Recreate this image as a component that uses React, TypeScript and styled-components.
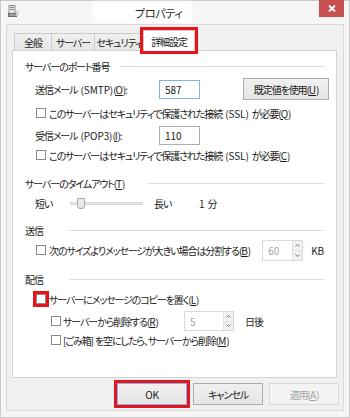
import styled, { createGlobalStyle } from "styled-components";

const RED = "#e8141b";

const GlobalStyle = createGlobalStyle`
  html, body {
    margin: 0;
    padding: 0;
    background: #ffffff;
  }
  body {
    font-family: "Noto Sans CJK JP", "Noto Sans", sans-serif;
    font-size: 10px;
    letter-spacing: -1.1px;
    word-spacing: 1px;
    color: #1a1a1a;
    font-feature-settings: "palt";
  }
  * { box-sizing: border-box; }
`;

const Window = styled.div`
  width: 350px;
  height: 418px;
  border: 1px solid #c9c9c9;
  background: #f6f6f6;
  display: flex;
  flex-direction: column;
`;

const TitleBar = styled.div`
  height: 23px;
  flex-shrink: 0;
  display: flex;
  align-items: flex-start;
`;

const AppIcon = styled.svg`
  margin: 4px 0 0 7px;
  flex-shrink: 0;
`;

const TitleGlow = styled.div`
  margin: 3px 0 0 76px;
  width: 95px;
  height: 17px;
  padding-left: 40px;
  display: flex;
  align-items: center;
  font-size: 11px;
  letter-spacing: -0.3px;
  color: #1f1f1f;
  background: #ffffff;
  box-shadow: 0 0 4px 2px #ffffff;
  white-space: nowrap;
`;

const CloseButton = styled.div`
  margin: -1px 5px 0 auto;
  width: 25px;
  height: 17px;
  background: #c75050;
  display: flex;
  align-items: center;
  justify-content: center;
`;

const Client = styled.div`
  flex: 1;
  margin: 0 5px 6px 5px;
  border: 1px solid #d9d9d9;
  background: #f0f0f0;
  display: flex;
  flex-direction: column;
  padding: 5px 4px 0 5px;
`;

const TabStrip = styled.div`
  height: 21px;
  margin-bottom: -1px;
  padding-left: 2px;
  display: flex;
  align-items: flex-end;
  position: relative;
  z-index: 1;
`;

const Tab = styled.div<{ $w: number; $active?: boolean }>`
  width: ${({ $w }) => $w}px;
  height: ${({ $active }) => ($active ? 21 : 17)}px;
  margin-bottom: ${({ $active }) => ($active ? 0 : 1)}px;
  margin-left: -1px;
  border: 1px solid #cccccc;
  border-bottom: none;
  background: ${({ $active }) => ($active ? "#ffffff" : "linear-gradient(#f0f0f0, #e5e5e5)")};
  display: flex;
  align-items: center;
  justify-content: center;
  padding-top: ${({ $active }) => ($active ? 0 : 1)}px;
  white-space: nowrap;
  outline: ${({ $active }) => ($active ? `3px solid ${RED}` : "none")};
  &:first-child {
    margin-left: 0;
  }
`;

const Panel = styled.div`
  height: 328px;
  margin-right: 2px;
  border: 1px solid #d4d4d4;
  background: #ffffff;
  padding: 7px 12px 0 12px;
  display: flex;
  flex-direction: column;
`;

const GroupHeader = styled.div<{ $mt?: number }>`
  height: 16px;
  margin-top: ${({ $mt }) => $mt ?? 0}px;
  display: flex;
  align-items: center;
`;

const GroupLabel = styled.span<{ $w: number }>`
  width: ${({ $w }) => $w}px;
  flex-shrink: 0;
  white-space: nowrap;
`;

const Rule = styled.div`
  flex: 1;
  height: 1px;
  margin-top: 1px;
  background: #dcdcdc;
`;

const Row = styled.div<{ $mt?: number; $h?: number; $indent?: number }>`
  height: ${({ $h }) => $h ?? 18}px;
  margin-top: ${({ $mt }) => $mt ?? 0}px;
  padding-left: ${({ $indent }) => $indent ?? 10}px;
  display: flex;
  align-items: center;
  white-space: nowrap;
`;

const FieldLabel = styled.span<{ $w: number }>`
  width: ${({ $w }) => $w}px;
  flex-shrink: 0;
`;

const Latin = styled.span`
  letter-spacing: -0.1px;
`;

const TextBox = styled.div<{ $focus?: boolean }>`
  width: 41px;
  height: 19px;
  border: 1px solid ${({ $focus }) => ($focus ? "#7eb4ea" : "#abadb3")};
  background: #ffffff;
  padding-left: 5px;
  letter-spacing: 0;
  display: flex;
  align-items: center;
`;

const Button = styled.div<{ $w?: number; $default?: boolean; $disabled?: boolean }>`
  width: ${({ $w }) => $w ?? 70}px;
  height: 22px;
  flex-shrink: 0;
  border: 1px solid
    ${({ $default, $disabled }) => ($default ? "#7eb4ea" : $disabled ? "#d9d9d9" : "#acacac")};
  background: ${({ $disabled }) => ($disabled ? "#f4f4f4" : "linear-gradient(#f0f0f0, #e5e5e5)")};
  color: ${({ $disabled }) => ($disabled ? "#a3a3a3" : "#1a1a1a")};
  display: flex;
  align-items: center;
  justify-content: center;
  white-space: nowrap;
  outline: ${({ $default }) => ($default ? `3px solid ${RED}` : "none")};
`;

const CheckItem = styled.div<{ $gap?: number; $w?: number }>`
  display: flex;
  align-items: center;
  gap: ${({ $gap }) => $gap ?? 3}px;
  width: ${({ $w }) => ($w ? `${$w}px` : "auto")};
  flex-shrink: 0;
`;

const CheckBox = styled.span<{ $marked?: boolean }>`
  width: 10px;
  height: 10px;
  flex-shrink: 0;
  border: 1px solid #8a8a8a;
  background: #ffffff;
  outline: ${({ $marked }) => ($marked ? `3px solid ${RED}` : "none")};
`;

const Mn = styled.span`
  text-decoration: underline;
  text-underline-offset: 1px;
  letter-spacing: -0.1px;
`;

const SliderTrack = styled.div`
  position: relative;
  width: 73px;
  height: 3px;
  flex-shrink: 0;
  background: #e7eaea;
  border: 1px solid #d6d6d6;
`;

const SliderThumb = styled.div`
  position: absolute;
  left: 6px;
  top: -5px;
  width: 8px;
  height: 11px;
  background: linear-gradient(#f0f0f0, #e3e3e3);
  border: 1px solid #a8a8a8;
  border-radius: 1px 1px 3px 3px;
`;

const Spacer = styled.span<{ $w: number }>`
  width: ${({ $w }) => $w}px;
  flex-shrink: 0;
`;

const PushRight = styled.span`
  margin-left: auto;
`;

const SpinBox = styled.div<{ $w: number; $h: number }>`
  width: ${({ $w }) => $w}px;
  height: ${({ $h }) => $h}px;
  flex-shrink: 0;
  border: 1px solid #d9d9d9;
  background: #ffffff;
  display: flex;
`;

const SpinValue = styled.span`
  flex: 1;
  padding-left: 5px;
  color: #a3a3a3;
  letter-spacing: 0;
  display: flex;
  align-items: center;
`;

const SpinButtons = styled.div`
  width: 10px;
  display: flex;
  flex-direction: column;
  background: #f0f0f0;
  border-left: 1px solid #e3e3e3;
`;

const SpinHalf = styled.div`
  flex: 1;
  display: flex;
  align-items: center;
  justify-content: center;
  & + & {
    border-top: 1px solid #e3e3e3;
  }
`;

const Unit = styled.span<{ $ml: number }>`
  margin-left: ${({ $ml }) => $ml}px;
`;

const ButtonRow = styled.div`
  margin-top: 5px;
  display: flex;
  justify-content: flex-end;
  gap: 6px;
`;

function Spinner({ value, w, h }: { value: string; w: number; h: number }) {
  return (
    <SpinBox $w={w} $h={h}>
      <SpinValue>{value}</SpinValue>
      <SpinButtons>
        <SpinHalf>
          <svg width="5" height="3" viewBox="0 0 5 3">
            <path d="M0.5 2.5 L2.5 0.5 L4.5 2.5" fill="none" stroke="#6d6d6d" strokeWidth="1" />
          </svg>
        </SpinHalf>
        <SpinHalf>
          <svg width="5" height="3" viewBox="0 0 5 3">
            <path d="M0.5 0.5 L2.5 2.5 L4.5 0.5" fill="none" stroke="#6d6d6d" strokeWidth="1" />
          </svg>
        </SpinHalf>
      </SpinButtons>
    </SpinBox>
  );
}

export default function App() {
  return (
    <>
      <GlobalStyle />
      <Window>
        <TitleBar>
          <AppIcon width="11" height="12" viewBox="0 0 11 12">
            <rect x="1" y="0.5" width="6" height="8" fill="#e4e4e4" stroke="#8c8c8c" />
            <rect x="2.5" y="2" width="3" height="1" fill="#7a7a7a" />
            <rect x="2.5" y="4" width="3" height="1" fill="#7a7a7a" />
            <rect x="0.5" y="8.5" width="8" height="3" fill="#9aa0a6" stroke="#6f6f6f" />
            <rect x="8" y="6" width="2.5" height="5" fill="#c9d3dc" />
          </AppIcon>
          <TitleGlow>プロパティ</TitleGlow>
          <CloseButton>
            <svg width="8" height="7" viewBox="0 0 8 7">
              <path d="M1 0.5 L7 6.5 M7 0.5 L1 6.5" stroke="#ffffff" strokeWidth="1.8" />
            </svg>
          </CloseButton>
        </TitleBar>

        <Client>
          <TabStrip>
            <Tab $w={38}>全般</Tab>
            <Tab $w={44}>サーバー</Tab>
            <Tab $w={50}>セキュリティ</Tab>
            <Tab $w={52} $active>
              詳細設定
            </Tab>
          </TabStrip>

          <Panel>
            <GroupHeader>
              <GroupLabel $w={95}>サーバーのポート番号</GroupLabel>
              <Rule />
            </GroupHeader>
            <Row $mt={4} $h={22} style={{ marginRight: -5 }}>
              <FieldLabel $w={124}>
                送信メール<Latin> (SMTP)</Latin>(<Mn>O</Mn>):
              </FieldLabel>
              <TextBox $focus>587</TextBox>
              <PushRight />
              <Button $w={86}>
                既定値を使用(<Mn>U</Mn>)
              </Button>
            </Row>
            <Row $mt={4} $indent={11}>
              <CheckItem>
                <CheckBox />
                <span>
                  このサーバーはセキュリティで保護された接続<Latin> (SSL) </Latin>が必要(<Mn>Q</Mn>)
                </span>
              </CheckItem>
            </Row>
            <Row $mt={2} $h={22}>
              <FieldLabel $w={124}>
                受信メール<Latin> (POP3)</Latin>(<Mn>I</Mn>):
              </FieldLabel>
              <TextBox>110</TextBox>
            </Row>
            <Row $indent={11}>
              <CheckItem>
                <CheckBox />
                <span>
                  このサーバーはセキュリティで保護された接続<Latin> (SSL) </Latin>が必要(<Mn>C</Mn>)
                </span>
              </CheckItem>
            </Row>

            <GroupHeader $mt={11}>
              <GroupLabel $w={123}>
                サーバーのタイムアウト(<Mn>T</Mn>)
              </GroupLabel>
              <Rule />
            </GroupHeader>
            <Row $mt={3}>
              <FieldLabel $w={35}>短い</FieldLabel>
              <SliderTrack>
                <SliderThumb />
              </SliderTrack>
              <Spacer $w={11} />
              <FieldLabel $w={45}>長い</FieldLabel>
              <span>
                <Latin>1 </Latin>分
              </span>
            </Row>

            <GroupHeader $mt={10}>
              <GroupLabel $w={44}>送信</GroupLabel>
              <Rule />
            </GroupHeader>
            <Row $mt={1} $h={22} $indent={11}>
              <CheckItem>
                <CheckBox />
                <span>
                  次のサイズよりメッセージが大きい場合は分割する(<Mn>B</Mn>)
                </span>
              </CheckItem>
              <PushRight />
              <Spinner value="60" w={41} h={21} />
              <Unit $ml={8}>
                <Latin>KB</Latin>
              </Unit>
            </Row>

            <GroupHeader $mt={10}>
              <GroupLabel $w={44}>配信</GroupLabel>
              <Rule />
            </GroupHeader>
            <Row $mt={3} $indent={11}>
              <CheckItem>
                <CheckBox $marked />
                <span>
                  サーバーにメッセージのコピーを置く(<Mn>L</Mn>)
                </span>
              </CheckItem>
            </Row>
            <Row $mt={3} $h={20} $indent={26}>
              <CheckItem $gap={2} $w={133}>
                <CheckBox />
                <span>
                  サーバーから削除する(<Mn>R</Mn>)
                </span>
              </CheckItem>
              <Spinner value="5" w={50} h={20} />
              <Unit $ml={11}>日後</Unit>
            </Row>
            <Row $indent={26}>
              <CheckItem $gap={2}>
                <CheckBox />
                <span>
                  [ごみ箱] を空にしたら、サーバーから削除(<Mn>M</Mn>)
                </span>
              </CheckItem>
            </Row>
          </Panel>

          <ButtonRow>
            <Button $default>
              <Latin>OK</Latin>
            </Button>
            <Button>キャンセル</Button>
            <Button $disabled>
              適用(<Mn>A</Mn>)
            </Button>
          </ButtonRow>
        </Client>
      </Window>
    </>
  );
}
